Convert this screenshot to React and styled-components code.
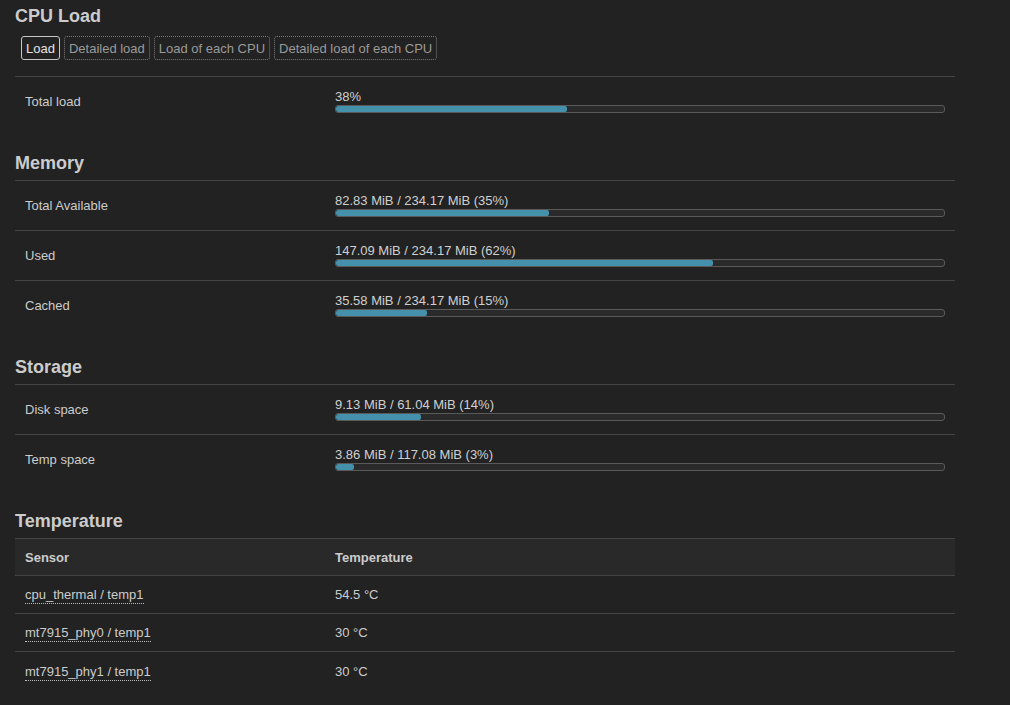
import React from 'react'
import styled, { createGlobalStyle } from 'styled-components'

const Global = createGlobalStyle`
  html, body {
    margin: 0;
    background: #222222;
  }
  body {
    font-family: "Liberation Sans", Arial, sans-serif;
    font-size: 13px;
    color: #cccccc;
  }
`

const memory = [
  { label: 'Total Available', text: '82.83 MiB / 234.17 MiB (35%)', pct: 35 },
  { label: 'Used', text: '147.09 MiB / 234.17 MiB (62%)', pct: 62 },
  { label: 'Cached', text: '35.58 MiB / 234.17 MiB (15%)', pct: 15 },
]

const storage = [
  { label: 'Disk space', text: '9.13 MiB / 61.04 MiB (14%)', pct: 14 },
  { label: 'Temp space', text: '3.86 MiB / 117.08 MiB (3%)', pct: 3 },
]

const sensors = [
  { name: 'cpu_thermal / temp1', value: '54.5 °C' },
  { name: 'mt7915_phy0 / temp1', value: '30 °C' },
  { name: 'mt7915_phy1 / temp1', value: '30 °C' },
]

const tabs = ['Load', 'Detailed load', 'Load of each CPU', 'Detailed load of each CPU']

const Progress = ({ text, pct }) => (
  <ValueBox>
    <ValueText>{text}</ValueText>
    <Bar>
      <Fill style={{ width: `${pct}%` }} />
    </Bar>
  </ValueBox>
)

const App = () => {
  return (
    <Page>
      <Global />
      <Section>
        <Heading>CPU Load</Heading>
        <Tabs>
          {tabs.map((t, i) => (
            <Tab key={t} active={i === 0}>{t}</Tab>
          ))}
        </Tabs>
        <Rows>
          <Row>
            <Label>Total load</Label>
            <Progress text="38%" pct={38} />
          </Row>
        </Rows>
      </Section>

      <Section>
        <Heading>Memory</Heading>
        <Rows>
          {memory.map(m => (
            <Row key={m.label}>
              <Label>{m.label}</Label>
              <Progress text={m.text} pct={m.pct} />
            </Row>
          ))}
        </Rows>
      </Section>

      <Section>
        <Heading>Storage</Heading>
        <Rows>
          {storage.map(m => (
            <Row key={m.label}>
              <Label>{m.label}</Label>
              <Progress text={m.text} pct={m.pct} />
            </Row>
          ))}
        </Rows>
      </Section>

      <Section>
        <Heading>Temperature</Heading>
        <Table>
          <HeadRow>
            <HeadCell>Sensor</HeadCell>
            <HeadCell>Temperature</HeadCell>
          </HeadRow>
          {sensors.map(s => (
            <TableRow key={s.name}>
              <Cell><Sensor>{s.name}</Sensor></Cell>
              <Cell>{s.value}</Cell>
            </TableRow>
          ))}
        </Table>
      </Section>
    </Page>
  )
}

const Page = styled.div`
  padding: 6px 0 0 15px;
  width: 940px;
`

const Section = styled.section`
  margin-bottom: 26px;
  &:last-child {
    margin-bottom: 0;
  }
`

const Heading = styled.h3`
  margin: 0 0 7px;
  font-size: 18px;
  line-height: 20px;
  font-weight: bold;
  color: #cccccc;
`

const Tabs = styled.div`
  display: flex;
  gap: 4px;
  margin: 10px 0 16px 6px;
`

const Tab = styled.div`
  height: 24px;
  box-sizing: border-box;
  padding: 0 4px;
  display: flex;
  align-items: center;
  border-radius: 3px;
  border: 1px ${p => (p.active ? 'solid #c8c8c8' : 'dotted #7a7a7a')};
  color: ${p => (p.active ? '#e4e4e4' : '#9a9a9a')};
  font-size: 13px;
`

const Rows = styled.div`
  border-top: 1px solid #444444;
`

const Row = styled.div`
  display: grid;
  grid-template-columns: 320px 1fr;
  align-items: center;
  height: 50px;
  box-sizing: border-box;
  border-bottom: 1px solid #444444;
  &:last-child {
    border-bottom: none;
  }
`

const Label = styled.div`
  padding-left: 10px;
  padding-bottom: 1px;
`

const ValueBox = styled.div`
  display: flex;
  flex-direction: column;
  gap: 1px;
  padding-right: 10px;
  padding-bottom: 2px;
`

const ValueText = styled.div`
  line-height: 15px;
  color: #d0d0d0;
`

const Bar = styled.div`
  height: 8px;
  box-sizing: border-box;
  border: 1px solid #5a5a5a;
  border-radius: 3px;
  background: #2a2a2a;
  overflow: hidden;
`

const Fill = styled.div`
  height: 100%;
  background: #4590aa;
  border-radius: 2px;
`

const Table = styled.div`
  border-top: 1px solid #444444;
`

const HeadRow = styled.div`
  display: grid;
  grid-template-columns: 310px 1fr;
  align-items: center;
  height: 37px;
  box-sizing: border-box;
  background: #292929;
  border-bottom: 1px solid #444444;
`

const HeadCell = styled.div`
  padding-left: 10px;
  font-weight: bold;
  color: #cccccc;
`

const TableRow = styled.div`
  display: grid;
  grid-template-columns: 310px 1fr;
  align-items: center;
  height: 38px;
  box-sizing: border-box;
  border-bottom: 1px solid #444444;
  &:last-child {
    border-bottom: none;
  }
`

const Cell = styled.div`
  padding-left: 10px;
`

const Sensor = styled.span`
  border-bottom: 1px dotted #bbbbbb;
  padding-bottom: 1px;
`

export default App
